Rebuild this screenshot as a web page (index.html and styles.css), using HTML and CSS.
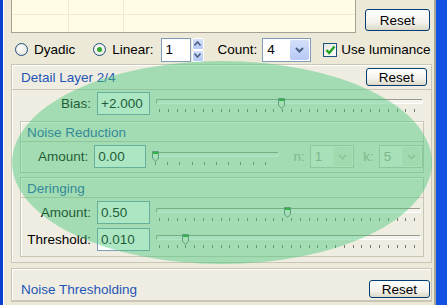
FILE: index.html
```html
<!DOCTYPE html>
<html lang="en">
<head>
    <meta charset="UTF-8">
    <title>Detail Layers</title>
    <link rel="stylesheet" href="styles.css">
</head>
<body>
    <div class="window">
        <div class="client">
            <!-- curve view + reset -->
            <div class="top-row">
                <div class="graph">
                    <div class="grid-h"></div>
                </div>
                <button class="btn btn-big">Reset</button>
            </div>

            <!-- decomposition mode -->
            <div class="mode-row">
                <span class="radio"></span><span class="mode-label">Dyadic</span>
                <span class="radio checked"></span><span class="mode-label">Linear:</span>
                <div class="spin">
                    <span class="spin-value">1</span>
                    <div class="spin-btns">
                        <span class="spin-up"><svg width="7" height="5" viewBox="0 0 7 5"><path d="M0.5 4.5 L3.5 1 L6.5 4.5" fill="none" stroke="#4d6185" stroke-width="1.6"/></svg></span>
                        <span class="spin-down"><svg width="7" height="5" viewBox="0 0 7 5"><path d="M0.5 0.5 L3.5 4 L6.5 0.5" fill="none" stroke="#4d6185" stroke-width="1.6"/></svg></span>
                    </div>
                </div>
                <span class="count-label">Count:</span>
                <div class="combo combo-count">
                    <span class="combo-value">4</span>
                    <span class="combo-btn"><svg width="9" height="6" viewBox="0 0 9 6"><path d="M1 1 L4.5 4.5 L8 1" fill="none" stroke="#4d6185" stroke-width="2"/></svg></span>
                </div>
                <span class="check"><svg width="11" height="10" viewBox="0 0 11 10"><path d="M1.5 5 L4.2 8 L9.5 1.5" fill="none" stroke="#21a121" stroke-width="2.4"/></svg></span>
                <span class="check-label">Use luminance</span>
            </div>

            <!-- current layer -->
            <div class="group group-detail">
                <div class="group-head">
                    <span class="group-title">Detail Layer 2/4</span>
                    <button class="btn">Reset</button>
                </div>
                <div class="group-body">
                    <div class="field">
                        <label class="lbl lbl-top">Bias:</label>
                        <span class="edit">+2.000</span>
                        <div class="slider">
                            <div class="track"></div>
                            <div class="ticks"></div>
                            <svg class="thumb" style="left: 122px" width="7" height="11" viewBox="0 0 7 11"><path d="M0.5 0.5 H6.5 V7 L3.5 10.5 L0.5 7 Z" fill="#f5f4ea" stroke="#6f7c88"/><rect x="1" y="1" width="5" height="2" fill="#21a121"/></svg>
                        </div>
                    </div>

                    <div class="sub">
                        <div class="sub-head">Noise Reduction</div>
                        <div class="sub-body">
                            <div class="field">
                                <label class="lbl">Amount:</label>
                                <span class="edit">0.00</span>
                                <div class="slider slider-short">
                                    <div class="track"></div>
                                    <div class="ticks"></div>
                                    <svg class="thumb" style="left: 0px" width="7" height="11" viewBox="0 0 7 11"><path d="M0.5 0.5 H6.5 V7 L3.5 10.5 L0.5 7 Z" fill="#f5f4ea" stroke="#6f7c88"/><rect x="1" y="1" width="5" height="2" fill="#21a121"/></svg>
                                </div>
                                <span class="dim-label">n:</span>
                                <div class="combo combo-off">
                                    <span class="combo-value">1</span>
                                    <span class="combo-btn"><svg width="9" height="6" viewBox="0 0 9 6"><path d="M1 1 L4.5 4.5 L8 1" fill="none" stroke="#c9c7ba" stroke-width="2"/></svg></span>
                                </div>
                                <span class="dim-label dim-k">k:</span>
                                <div class="combo combo-off">
                                    <span class="combo-value">5</span>
                                    <span class="combo-btn"><svg width="9" height="6" viewBox="0 0 9 6"><path d="M1 1 L4.5 4.5 L8 1" fill="none" stroke="#c9c7ba" stroke-width="2"/></svg></span>
                                </div>
                            </div>
                        </div>
                    </div>

                    <div class="sub sub-dering">
                        <div class="sub-head">Deringing</div>
                        <div class="sub-body">
                            <div class="field">
                                <label class="lbl">Amount:</label>
                                <span class="edit">0.50</span>
                                <div class="slider slider-sub">
                                    <div class="track"></div>
                                    <div class="ticks"></div>
                                    <svg class="thumb" style="left: 128px" width="7" height="11" viewBox="0 0 7 11"><path d="M0.5 0.5 H6.5 V7 L3.5 10.5 L0.5 7 Z" fill="#f5f4ea" stroke="#6f7c88"/><rect x="1" y="1" width="5" height="2" fill="#21a121"/></svg>
                                </div>
                            </div>
                            <div class="field">
                                <label class="lbl">Threshold:</label>
                                <span class="edit">0.010</span>
                                <div class="slider slider-sub">
                                    <div class="track"></div>
                                    <div class="ticks"></div>
                                    <svg class="thumb" style="left: 26px" width="7" height="11" viewBox="0 0 7 11"><path d="M0.5 0.5 H6.5 V7 L3.5 10.5 L0.5 7 Z" fill="#f5f4ea" stroke="#6f7c88"/><rect x="1" y="1" width="5" height="2" fill="#21a121"/></svg>
                                </div>
                            </div>
                        </div>
                    </div>
                </div>
            </div>

            <!-- next section -->
            <div class="group group-next">
                <div class="group-head">
                    <span class="group-title">Noise Thresholding</span>
                    <button class="btn">Reset</button>
                </div>
            </div>
        </div>

        <!-- highlight ellipse drawn over the panel -->
        <div class="highlight"></div>
    </div>
</body>
</html>
```

FILE: styles.css
```css
/* Reset */
* {
    box-sizing: border-box;
}

body {
    margin: 0;
    font-family: "Liberation Sans", Arial, sans-serif;
    font-size: 13.5px;
    color: #000;
    background: #0b45dc;
}

/* Window frame */
.window {
    position: relative;
    width: 447px;
    height: 305px;
    overflow: hidden;
    background: #1452e6;
    border-left: 3px solid #0a3fcf;
}

.client {
    width: 433px;
    height: 305px;
    background: #ece9d8;
    border-left: 1px solid #fff;
    border-right: 2px solid #aca899;
    padding: 0 2px 0 7px;
    white-space: nowrap;
}

/* Top row */
.top-row {
    display: flex;
    height: 33px;
}

.graph {
    position: relative;
    width: 345px;
    height: 33px;
    background: #fffbe4;
    border-left: 1px solid #a5a293;
    border-right: 1px solid #a5a293;
    border-bottom: 1px solid #a5a293;
    background-image:
        linear-gradient(to right, transparent 56px, #f0ebcc 56px, #f0ebcc 57px, transparent 57px),
        linear-gradient(to right, transparent 111px, #f0ebcc 111px, #f0ebcc 112px, transparent 112px);
}

.grid-h {
    height: 15px;
    border-bottom: 1px solid #f0ebcc;
}

.btn {
    font-family: inherit;
    font-size: 13.5px;
    color: #000;
    width: 61px;
    height: 18px;
    padding: 0;
    line-height: 15px;
    border: 1px solid #003c74;
    border-radius: 3px;
    background: linear-gradient(#ffffff, #f3f2ec 60%, #dcd8c8);
}

.btn-big {
    width: 65px;
    height: 22px;
    margin: 9px 0 0 9px;
}

/* Mode row */
.mode-row {
    display: flex;
    align-items: center;
    height: 31px;
    padding-top: 2px;
}

.mode-row > * {
    flex-shrink: 0;
}

.radio {
    width: 13px;
    height: 13px;
    border: 1px solid #1c5180;
    border-radius: 50%;
    background: radial-gradient(circle at 40% 40%, #fff, #e5e4dc 80%);
    margin-left: 4px;
    position: relative;
}

.radio.checked {
    margin-left: 18px;
}

.radio.checked::after {
    content: "";
    position: absolute;
    left: 3px;
    top: 3px;
    width: 5px;
    height: 5px;
    border-radius: 50%;
    background: #2fa82f;
}

.mode-label {
    margin-left: 6px;
}

.spin {
    display: flex;
    margin-left: 7px;
    height: 24px;
}

.spin-value {
    width: 30px;
    border: 1px solid #7f9db9;
    background: #fff;
    padding: 3px 0 0 4px;
}

.spin-btns {
    display: flex;
    flex-direction: column;
    width: 12px;
    margin-left: 1px;
}

.spin-btns span {
    flex: 1;
    display: flex;
    align-items: center;
    justify-content: center;
    background: linear-gradient(#d4e0fb, #b6c9f5);
    border: 1px solid #fff;
    border-radius: 2px;
}

.count-label {
    margin-left: 14px;
}

.combo {
    display: flex;
    width: 49px;
    height: 24px;
    border: 1px solid #7f9db9;
    background: #fff;
}

.combo-count {
    margin-left: 5px;
}

.combo-value {
    flex: 1;
    padding: 3px 0 0 4px;
}

.combo-btn {
    width: 19px;
    margin: 1px;
    display: flex;
    align-items: center;
    justify-content: center;
    border-radius: 2px;
    background: linear-gradient(#d4e0fb, #b6c9f5);
}

.check {
    width: 14px;
    height: 14px;
    margin-left: 12px;
    border: 1px solid #1c5180;
    background: linear-gradient(135deg, #e6e5de, #fff);
    display: flex;
    align-items: center;
    justify-content: center;
}

.check-label {
    margin-left: 4px;
}

/* Groups */
.group {
    border: 1px solid #c9c6b6;
    box-shadow: inset 1px 1px 0 #fff;
    background: #efede2;
}

.group-detail {
    height: 199px;
}

.group-next {
    margin-top: 5px;
}

.group-head {
    display: flex;
    align-items: center;
    justify-content: space-between;
    height: 25px;
    padding: 0 4px 0 9px;
    border-bottom: 1px solid #c9c6b6;
}

.group-next .group-head {
    height: 32px;
    padding-top: 9px;
    padding-right: 1px;
}

.group-title,
.sub-head {
    color: #1f55b5;
}

.group-body {
    padding: 2px 7px 0 8px;
}

.field {
    display: flex;
    align-items: flex-start;
    height: 23px;
}

.lbl {
    width: 70px;
    text-align: right;
    padding-top: 4px;
}

.lbl-top {
    width: 71px;
}

.edit {
    width: 53px;
    height: 23px;
    margin-left: 6px;
    border: 1px solid #7f9db9;
    background: #fff;
    padding: 3px 0 0 3px;
}

/* Track bars */
.slider {
    position: relative;
    flex: 1;
    height: 23px;
    margin-left: 6px;
    margin-right: 1px;
}

.slider-short {
    flex: none;
    width: 127px;
}

.slider-sub {
    margin-right: 2px;
}

.track {
    margin-top: 7px;
    height: 5px;
    border: 1px solid #9d9a8c;
    border-right-color: #fff;
    border-bottom-color: #fff;
    border-radius: 2px;
    background: #f4f3ee;
}

.ticks {
    margin: 5px 3px 0 3px;
    height: 3px;
    background: repeating-linear-gradient(to right, #7a7a72 0, #7a7a72 1px, transparent 1px, transparent 8.8px);
}

.slider-short .ticks {
    background: repeating-linear-gradient(to right, #7a7a72 0, #7a7a72 1px, transparent 1px, transparent 12.2px);
}

.thumb {
    position: absolute;
    top: 6px;
}

.dim-label {
    color: #aca899;
    margin: 4px 5px 0 14px;
}

.dim-k {
    margin-left: 9px;
}

.combo-off {
    width: 46px;
    height: 23px;
    border-color: #c9c7ba;
    background: #f6f5ef;
    color: #aca899;
}

.combo-off .combo-btn {
    background: #ebe9dd;
}

.sub {
    margin-top: 6px;
    border: 1px solid #c9c6b6;
    box-shadow: inset 1px 1px 0 #fff;
}

.sub-dering {
    margin-top: 4px;
}

.sub-head {
    height: 20px;
    padding: 3px 0 0 6px;
    border-bottom: 1px solid #c9c6b6;
}

.sub-body {
    padding: 3px 0 4px 0;
}

.sub-dering .sub-body {
    padding-bottom: 5px;
}

.sub-body .field + .field {
    margin-top: 4px;
}

/* Green highlight */
.highlight {
    position: absolute;
    left: 9px;
    top: 61px;
    width: 420px;
    height: 203px;
    border-radius: 50%;
    background: rgba(70, 200, 120, 0.45);
}
```
